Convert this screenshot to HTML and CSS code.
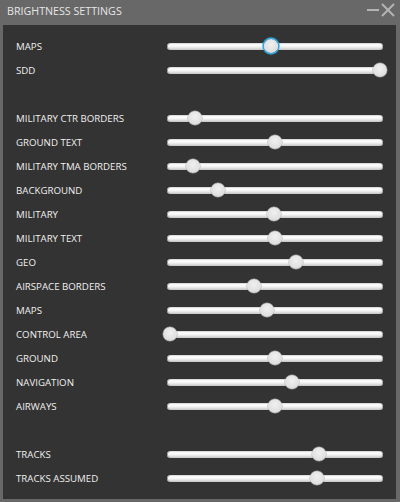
FILE: index.html
```html
<!DOCTYPE html>
<html>
<head>
<meta charset="utf-8">
<link rel="stylesheet" href="styles.css">
</head>
<body>
<div class="window">
  <div class="titlebar">
    <span class="title">BRIGHTNESS SETTINGS</span>
    <div class="controls">
      <svg width="30" height="16" viewBox="0 0 30 16">
        <line x1="0" y1="8" x2="12" y2="8" stroke="#b4b4b4" stroke-width="2"/>
        <line x1="15" y1="2" x2="27" y2="14" stroke="#b4b4b4" stroke-width="2"/>
        <line x1="27" y1="2" x2="15" y2="14" stroke="#b4b4b4" stroke-width="2"/>
      </svg>
    </div>
  </div>
  <div class="panel">
    <div class="row"><span class="label">MAPS</span><div class="slider"><div class="track"></div><div class="knob focus" style="--v:.48"></div></div></div>
    <div class="row"><span class="label">SDD</span><div class="slider"><div class="track"></div><div class="knob" style="--v:1"></div></div></div>
    <div class="spacer"></div>
    <div class="row"><span class="label">MILITARY CTR BORDERS</span><div class="slider"><div class="track"></div><div class="knob" style="--v:.12"></div></div></div>
    <div class="row"><span class="label">GROUND TEXT</span><div class="slider"><div class="track"></div><div class="knob" style="--v:.5"></div></div></div>
    <div class="row"><span class="label">MILITARY TMA BORDERS</span><div class="slider"><div class="track"></div><div class="knob" style="--v:.11"></div></div></div>
    <div class="row"><span class="label">BACKGROUND</span><div class="slider"><div class="track"></div><div class="knob" style="--v:.23"></div></div></div>
    <div class="row"><span class="label">MILITARY</span><div class="slider"><div class="track"></div><div class="knob" style="--v:.495"></div></div></div>
    <div class="row"><span class="label">MILITARY TEXT</span><div class="slider"><div class="track"></div><div class="knob" style="--v:.5"></div></div></div>
    <div class="row"><span class="label">GEO</span><div class="slider"><div class="track"></div><div class="knob" style="--v:.6"></div></div></div>
    <div class="row"><span class="label">AIRSPACE BORDERS</span><div class="slider"><div class="track"></div><div class="knob" style="--v:.4"></div></div></div>
    <div class="row"><span class="label">MAPS</span><div class="slider"><div class="track"></div><div class="knob" style="--v:.46"></div></div></div>
    <div class="row"><span class="label">CONTROL AREA</span><div class="slider"><div class="track"></div><div class="knob" style="--v:0"></div></div></div>
    <div class="row"><span class="label">GROUND</span><div class="slider"><div class="track"></div><div class="knob" style="--v:.5"></div></div></div>
    <div class="row"><span class="label">NAVIGATION</span><div class="slider"><div class="track"></div><div class="knob" style="--v:.58"></div></div></div>
    <div class="row"><span class="label">AIRWAYS</span><div class="slider"><div class="track"></div><div class="knob" style="--v:.5"></div></div></div>
    <div class="spacer"></div>
    <div class="row"><span class="label">TRACKS</span><div class="slider"><div class="track"></div><div class="knob" style="--v:.71"></div></div></div>
    <div class="row"><span class="label">TRACKS ASSUMED</span><div class="slider"><div class="track"></div><div class="knob" style="--v:.70"></div></div></div>
  </div>
</div>
</body>
</html>
```

FILE: styles.css
```css
* { box-sizing: border-box; }
html, body { margin: 0; padding: 0; background: #686868; }
body { font-family: "Open Sans", "Noto Sans", sans-serif; }
.window {
  width: 400px;
  height: 502px;
  background: #686868;
  display: flex;
  flex-direction: column;
}
.titlebar {
  height: 25px;
  display: flex;
  align-items: center;
  justify-content: space-between;
  padding: 0 3px 0 7px;
}
.title {
  color: #e6e6e6;
  font-size: 10.7px;
  line-height: 1;
  margin-top: -2px;
}
.controls { display: flex; margin-top: -5px; }
.controls svg { display: block; }
.panel {
  flex: 1;
  margin: 0 4px 3px 3px;
  background: #333333;
  padding: 9px 9px 8px 13px;
  display: flex;
  flex-direction: column;
}
.row {
  height: 24px;
  display: flex;
  align-items: center;
}
.spacer { height: 24px; }
.label {
  width: 147px;
  color: #f0f0f0;
  font-size: 9.7px;
  line-height: 1;
  margin-top: 1px;
}
.slider {
  position: relative;
  width: 224px;
  height: 24px;
  display: flex;
  align-items: center;
}
.track {
  flex: 1;
  margin: 0 4px;
  height: 7px;
  border-radius: 4px;
  background: linear-gradient(#cfcfcf 0%, #ffffff 25%, #f2f2f2 55%, #c4c4c4 100%);
  box-shadow: inset 1px 0 0 #9a9a9a, inset -1px 0 0 #a8a8a8;
}
.knob {
  position: absolute;
  top: 5px;
  left: calc((100% - 14px) * var(--v));
  width: 14px;
  height: 14px;
  border-radius: 50%;
  background: radial-gradient(circle at 50% 40%, #f0f0f0 0%, #e2e2e2 55%, #cfcfcf 100%);
  box-shadow: 0 0 0 0.5px #a0a0a0;
}
.knob.focus {
  box-shadow: 0 0 0 1.5px #2fa9df, 0 0 1px 2px rgba(47, 169, 223, 0.4);
}
```
